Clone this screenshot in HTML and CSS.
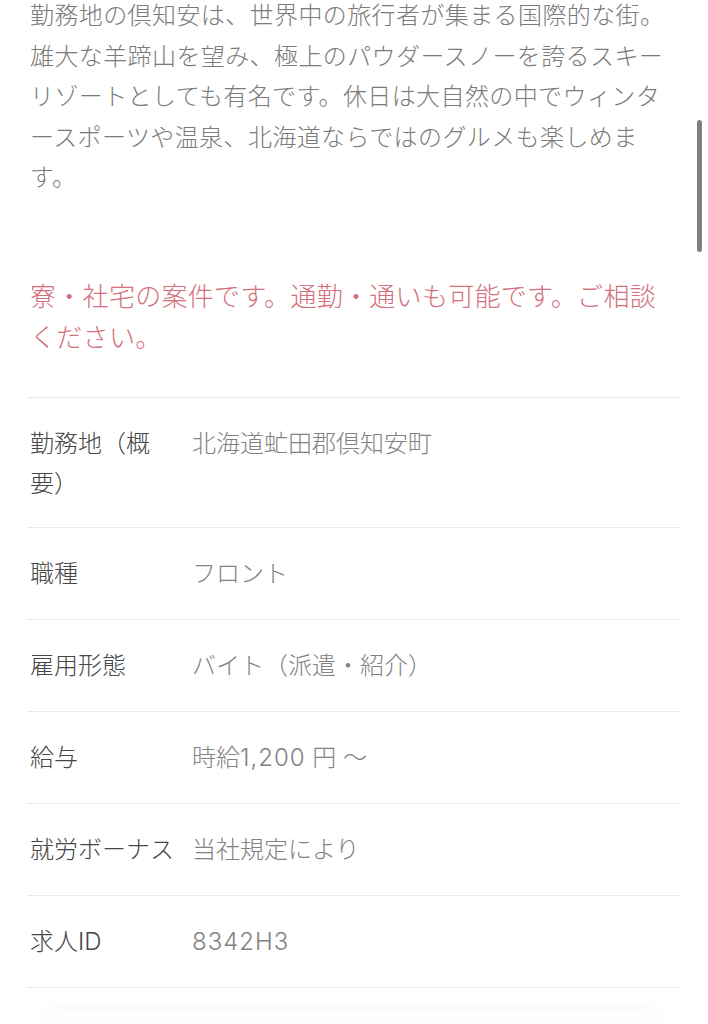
FILE: index.html
```html
<!DOCTYPE html>
<html lang="ja">
<head>
<meta charset="utf-8">
<title>求人詳細</title>
<link rel="stylesheet" href="styles.css">
</head>
<body>
<main class="page">
  <p class="intro">勤務地の倶知安は、世界中の旅行者が集まる国際的な街。雄大な羊蹄山を望み、極上のパウダースノーを誇るスキーリゾートとしても有名です。休日は大自然の中でウィンタースポーツや温泉、北海道ならではのグルメも楽しめます。</p>
  <p class="notice">寮・社宅の案件です。通勤・通いも可能です。ご相談ください。</p>
  <dl class="spec">
    <div class="row"><dt>勤務地（概要）</dt><dd>北海道虻田郡倶知安町</dd></div>
    <div class="row"><dt>職種</dt><dd>フロント</dd></div>
    <div class="row"><dt>雇用形態</dt><dd>バイト（派遣・紹介）</dd></div>
    <div class="row"><dt>給与</dt><dd>時給<span class="num">1,200</span> 円 ～</dd></div>
    <div class="row"><dt>就労ボーナス</dt><dd>当社規定により</dd></div>
    <div class="row"><dt>求人ID</dt><dd><span class="num">8342H3</span></dd></div>
  </dl>
  <div class="next-card"></div>
</main>
<div class="scrollbar"></div>
</body>
</html>
```

FILE: styles.css
```css
html, body {
  margin: 0;
  padding: 0;
  background: #ffffff;
}
body {
  font-family: Inter, "Noto Sans CJK JP", "Noto Sans", sans-serif;
  font-weight: 300;
  overflow: hidden;
}
.page {
  padding: 0 28px;
}
.intro {
  margin: -4px 0 0 0;
  font-size: 24px;
  letter-spacing: 0.4px;
  line-height: 40.5px;
  color: #7b7b7b;
  padding-left: 2px;
}
.notice {
  margin: 77px 0 0 0;
  font-size: 26px;
  letter-spacing: 0.3px;
  line-height: 41px;
  color: #d3707c;
  padding-left: 2px;
}
.spec {
  margin: 39px 0 0 0;
  border-top: 1px dotted #dcd8c6;
}
.row {
  display: flex;
  padding: 26px 0 25px 2px;
  border-bottom: 1px dotted #dcd8c6;
  font-size: 24px;
  line-height: 40px;
}
.spec .row:first-child {
  padding-bottom: 23px;
}
.row dt {
  width: 150px;
  flex: none;
  margin-right: 12px;
  color: #474747;
}
.row dd {
  margin: 0;
  color: #828282;
}
.num {
  letter-spacing: 1px;
}
.next-card {
  margin: 22px 20px 0;
  height: 40px;
  border-radius: 12px;
  box-shadow: 0 -4px 14px rgba(0, 0, 0, 0.03);
  background: #fdfdfd;
}
.scrollbar {
  position: fixed;
  right: 6px;
  top: 120px;
  width: 5px;
  height: 132px;
  border-radius: 3px;
  background: #7f7f7f;
}
```
